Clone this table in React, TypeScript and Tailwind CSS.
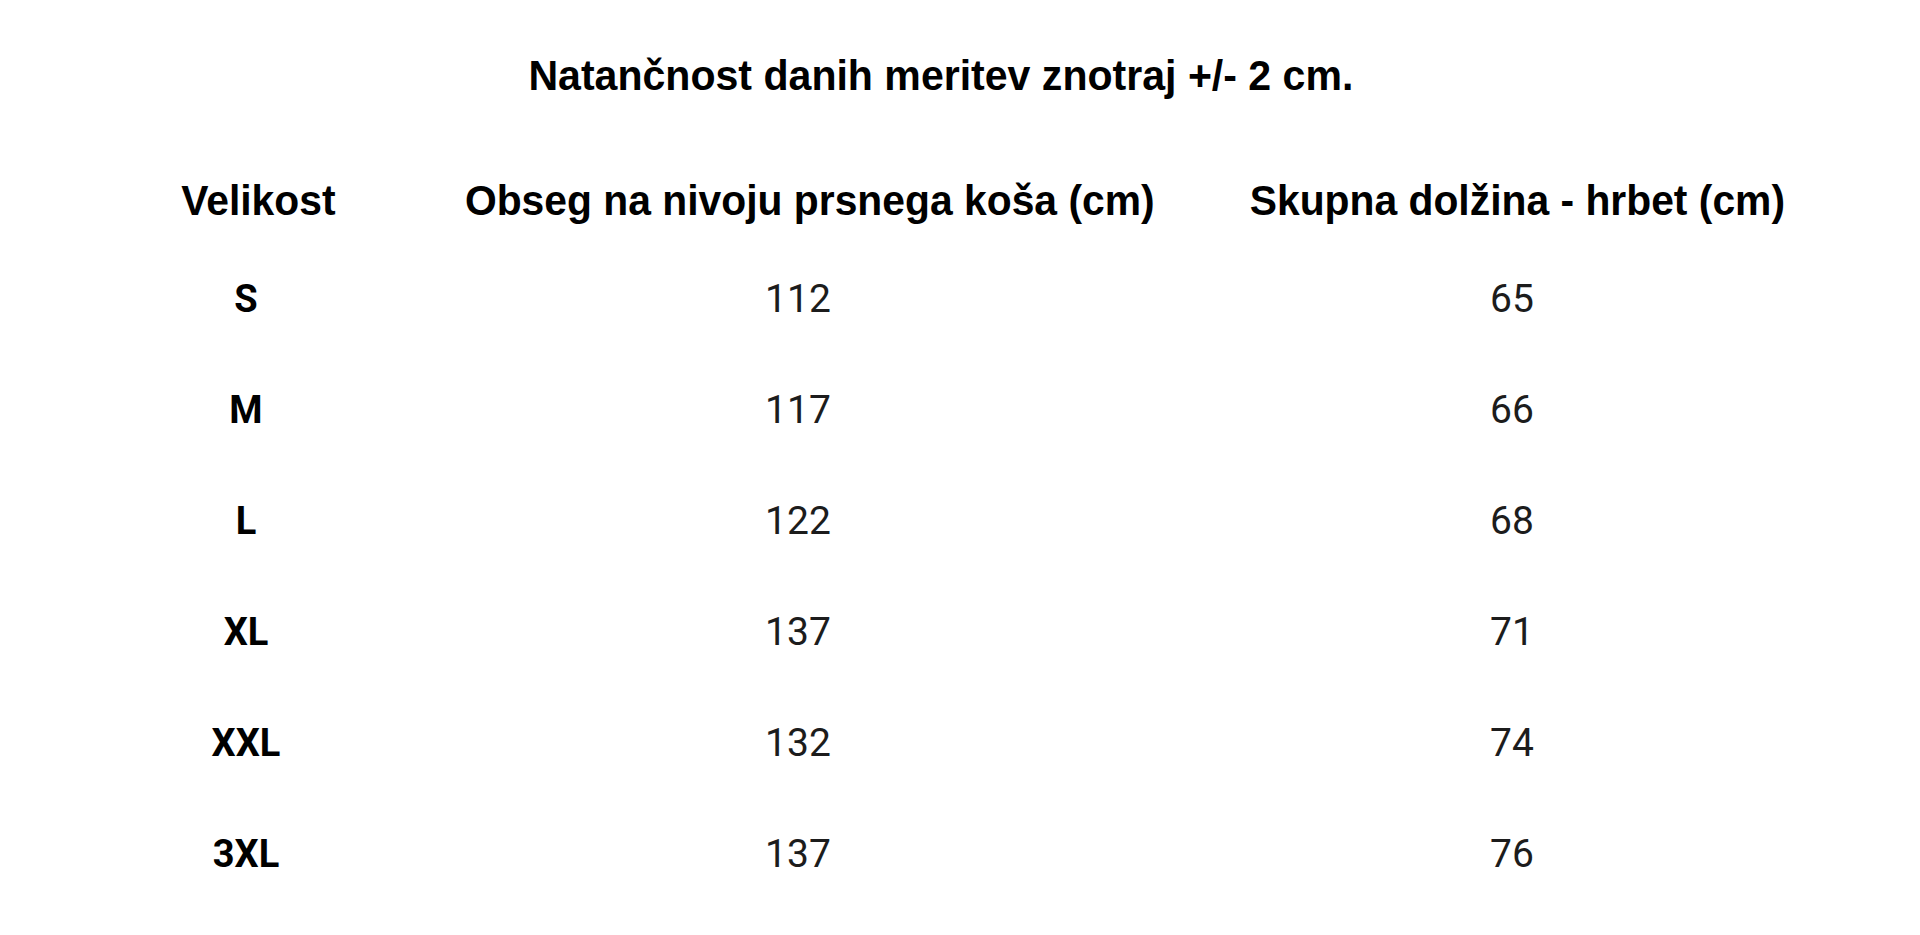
const rows = [
  { size: "S", chest: "112", length: "65" },
  { size: "M", chest: "117", length: "66" },
  { size: "L", chest: "122", length: "68" },
  { size: "XL", chest: "137", length: "71" },
  { size: "XXL", chest: "132", length: "74" },
  { size: "3XL", chest: "137", length: "76" },
];

const arial = "font-['Liberation_Sans',Arial,sans-serif] font-bold text-black";
const roboto = "font-['Roboto',sans-serif] text-[#1c1c1c]";

export default function App() {
  return (
    <div className="min-h-[935px] w-[1920px] bg-white">
      <div className="pt-[47px] pr-[38px] text-center">
        <h1 className={`${arial} inline-block h-[56px] scale-x-[0.955] whitespace-nowrap text-[43px] leading-[56px]`}>
          Natančnost danih meritev znotraj +/- 2 cm.
        </h1>
      </div>

      <div className="mt-[68px] grid h-[60px] grid-cols-[492px_612px_1fr] items-center">
        <HeadCell className="pl-6">Velikost</HeadCell>
        <HeadCell className="pl-6">Obseg na nivoju prsnega koša (cm)</HeadCell>
        <HeadCell className="pl-[10px]">Skupna dolžina - hrbet (cm)</HeadCell>
      </div>

      <div className="mt-[13px]">
        {rows.map((r) => (
          <div key={r.size} className="grid h-[111px] grid-cols-[492px_612px_1fr] items-center text-center">
            <span className={`${roboto} text-[38px] font-bold text-black`}>{r.size}</span>
            <span className={`${roboto} text-[39px]`}>{r.chest}</span>
            <span className={`${roboto} text-[39px]`}>{r.length}</span>
          </div>
        ))}
      </div>
    </div>
  );
}

function HeadCell({ className, children }: { className?: string; children: React.ReactNode }) {
  return (
    <div className={`flex min-w-0 justify-center ${className ?? ""}`}>
      <span className={`${arial} inline-block shrink-0 scale-x-[0.972] whitespace-nowrap text-[42px] leading-[60px]`}>
        {children}
      </span>
    </div>
  );
}
